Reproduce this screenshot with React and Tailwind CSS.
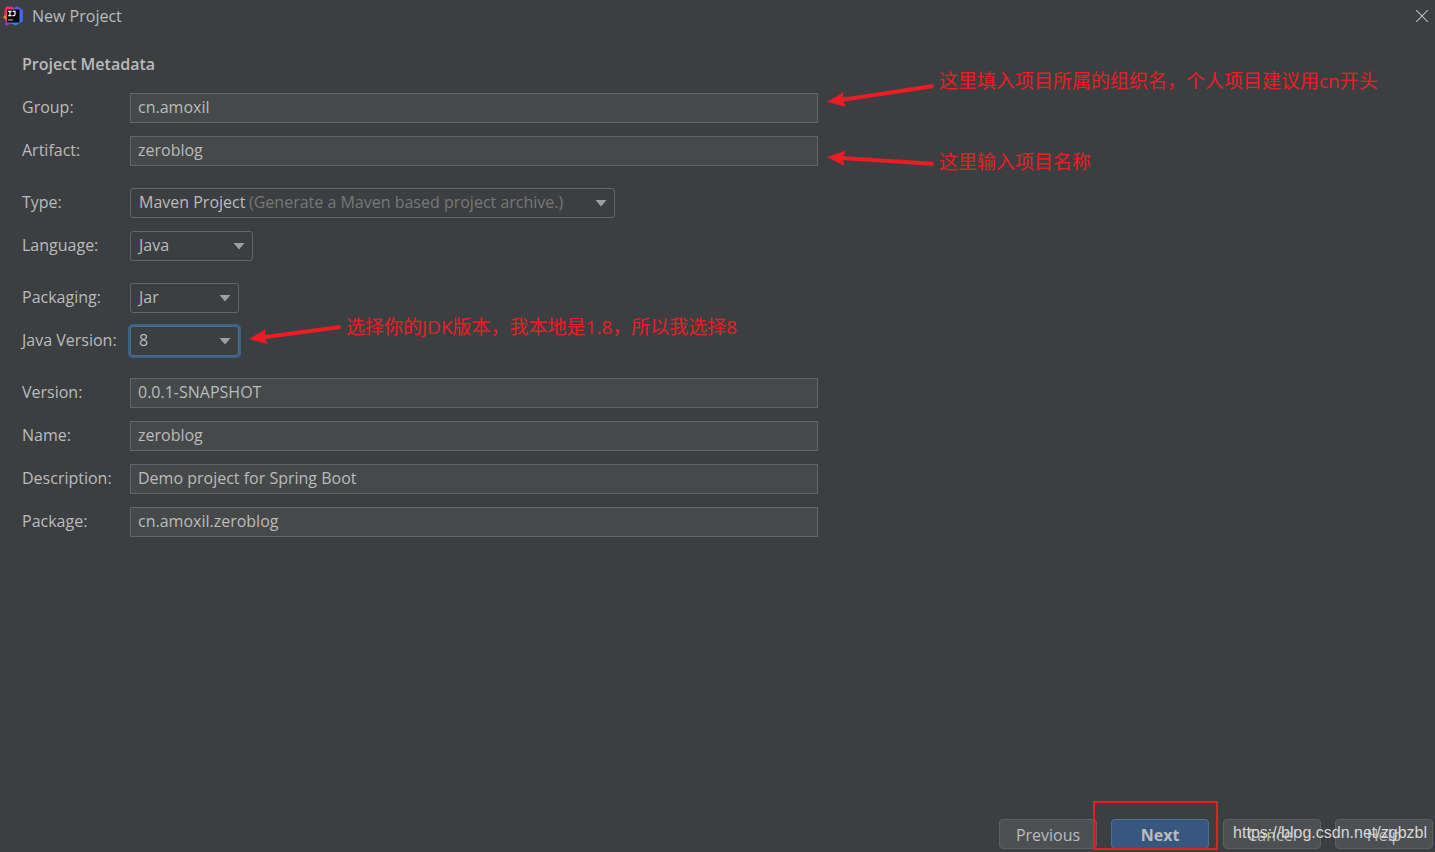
import { useState } from "react";

function AppLogo() {
  return (
    <svg className="w-5 h-5" viewBox="0 0 20 20">
      <defs>
        <linearGradient id="warm" x1="0" y1="0" x2="1" y2="0.3">
          <stop offset="0" stopColor="#fe2857" />
          <stop offset="0.7" stopColor="#f0357a" />
          <stop offset="1" stopColor="#7a4fd8" />
        </linearGradient>
        <linearGradient id="cool" x1="0" y1="0" x2="0" y2="1">
          <stop offset="0" stopColor="#5a58e0" />
          <stop offset="1" stopColor="#2f7bf0" />
        </linearGradient>
      </defs>
      <path d="M0 11l3.4-4 1.6 6.5L2.8 14z" fill="#fc801d" />
      <path d="M2.2 2.2L4 .2 10 1.2l2.5 3.4L10 12 4 12 1 7.6z" fill="url(#warm)" />
      <path d="M2.6 13.4l4-1.5 5 5-4.6 1.2-4.8 1.6z" fill="#9a3fb5" />
      <path d="M10.5 2.6L14 .2l6 3.8-.4 11.6-6.8 4-5.4-2.4 3-8z" fill="url(#cool)" />
      <rect x="4" y="3.5" width="12.5" height="13" fill="#0c0c0e" />
      <path d="M5.2 5.4h3.4M6.9 5.4v4.2M5.2 9.6h3.4M9.8 5.4h2.8M12 5.4v2.8q0 1.5-1.5 1.5h-1" stroke="#fff" strokeWidth="1.2" fill="none" />
      <path d="M5.2 14h4.6" stroke="#a8a8a8" strokeWidth="1.2" />
    </svg>
  );
}

function Arrow({ className, width, height, from, to }) {
  const angle = (Math.atan2(to[1] - from[1], to[0] - from[0]) * 180) / Math.PI;
  const length = Math.hypot(to[0] - from[0], to[1] - from[1]);
  return (
    <svg className={className} width={width} height={height} viewBox={`0 0 ${width} ${height}`}>
      <g transform={`translate(${to[0]} ${to[1]}) rotate(${angle})`} fill="#ed1c24">
        <path d={`M${2 - length} 0H-14`} stroke="#ed1c24" strokeWidth="4" strokeLinecap="round" />
        <path d="M0 0L-18 7.5L-15.5 0L-18-7.5z" />
      </g>
    </svg>
  );
}

function Note({ className, children }) {
  return (
    <p className={`absolute whitespace-nowrap text-[19px] leading-7 text-[#ed1c24] font-['Open_Sans','Noto_Sans_CJK_SC',sans-serif] ${className}`}>
      {children}
    </p>
  );
}

function Row({ id, label, children }) {
  return (
    <div className="flex items-center h-[30px]">
      <label htmlFor={id} className="w-[108px] shrink-0 whitespace-nowrap pb-[2px]">{label}</label>
      {children}
    </div>
  );
}

function TextField({ id, label, value, onChange, children }) {
  return (
    <Row id={id} label={label}>
      <div className="relative flex-1">
        <input
          id={id}
          name={id}
          type="text"
          value={value}
          onChange={onChange}
          className="block w-full h-[30px] px-[7px] pb-[2px] bg-[#45494a] border border-[#646666] outline-none"
        />
        {children}
      </div>
    </Row>
  );
}

function SelectField({ id, label, value, onChange, options, hint, width, focused, children }) {
  return (
    <Row id={id} label={label}>
      <div className={`relative ${width}`}>
        <select
          id={id}
          name={id}
          value={value}
          onChange={onChange}
          className={`block appearance-none w-full h-[30px] pl-1 indent-1 pr-8 pb-[2px] rounded-[3px] border bg-[#3c3f41] outline-none
            ${focused ? "border-[#466d94] ring-2 ring-[#3d6185]" : "border-[#646666]"}`}
        >
          {options.map((o) => (
            <option key={o}>{o}</option>
          ))}
        </select>
        {hint && (
          <span className="absolute left-[119px] top-0 leading-7 whitespace-nowrap text-[#777777] pointer-events-none">{hint}</span>
        )}
        <svg className="absolute right-2 top-3 w-3 h-[7px] pointer-events-none" viewBox="0 0 12 7">
          <path d="M0.5 0h11L6 6.5z" fill="#9da0a2" />
        </svg>
        {children}
      </div>
    </Row>
  );
}

const buttonBase = "w-[98px] h-[30px] pt-[2px] rounded-[4px] border";

export default function App() {
  const [form, setForm] = useState({
    group: "cn.amoxil",
    artifact: "zeroblog",
    type: "Maven Project",
    language: "Java",
    packaging: "Jar",
    javaVersion: "8",
    version: "0.0.1-SNAPSHOT",
    name: "zeroblog",
    description: "Demo project for Spring Boot",
    package: "cn.amoxil.zeroblog",
  });

  const handleChange = (e) => {
    const { name, value } = e.target;
    setForm((f) => ({ ...f, [name]: value }));
  };

  return (
    <div className="min-h-screen flex flex-col overflow-hidden bg-[#3c3f41] text-[#bbbbbb] text-base font-['Open_Sans','Noto_Sans_CJK_SC',sans-serif]">
      {/* Title bar */}
      <header className="flex items-center h-8 pl-[3px] pr-[7px]">
        <AppLogo />
        <span className="ml-[9px]">New Project</span>
        <button type="button" aria-label="Close" className="ml-auto">
          <svg className="w-3 h-3" viewBox="0 0 12 12" stroke="#b4b6b7" strokeWidth="1.2">
            <path d="M0 0l12 12M12 0L0 12" />
          </svg>
        </button>
      </header>

      <main className="flex-1 w-[57%] pl-[22px] pt-5">
        <h1 className="font-semibold leading-6 mb-[17px]">Project Metadata</h1>

        <form className="flex flex-col gap-[22px]">
          <div className="flex flex-col gap-[13px]">
            <TextField id="group" label="Group:" value={form.group} onChange={handleChange}>
              <Arrow className="absolute left-full top-[-15px] ml-2" width={110} height={34} from={[108, 8]} to={[1, 24]} />
              <Note className="left-full top-[-26px] ml-[121px]">这里填入项目所属的组织名，个人项目建议用cn开头</Note>
            </TextField>
            <TextField id="artifact" label="Artifact:" value={form.artifact} onChange={handleChange}>
              <Arrow className="absolute left-full top-2 ml-2" width={110} height={30} from={[108, 20]} to={[1, 13]} />
              <Note className="left-full top-3 ml-[121px]">这里输入项目名称</Note>
            </TextField>
          </div>

          <div className="flex flex-col gap-[13px]">
            <SelectField
              id="type"
              label="Type:"
              value={form.type}
              onChange={handleChange}
              options={["Maven Project", "Gradle Project"]}
              hint="(Generate a Maven based project archive.)"
              width="w-[485px]"
            />
            <SelectField id="language" label="Language:" value={form.language} onChange={handleChange} options={["Java", "Kotlin", "Groovy"]} width="w-[123px]" />
          </div>

          <div className="flex flex-col gap-[13px]">
            <SelectField id="packaging" label="Packaging:" value={form.packaging} onChange={handleChange} options={["Jar", "War"]} width="w-[109px]" />
            <SelectField id="javaVersion" label="Java Version:" value={form.javaVersion} onChange={handleChange} options={["8", "11", "14"]} width="w-[109px]" focused>
              <Arrow className="absolute left-full top-[-6px] ml-2" width={100} height={30} from={[94, 7]} to={[2, 19]} />
              <Note className="left-full top-[-13px] ml-[107px]">选择你的JDK版本，我本地是1.8，所以我选择8</Note>
            </SelectField>
          </div>

          <div className="flex flex-col gap-[13px]">
            <TextField id="version" label="Version:" value={form.version} onChange={handleChange} />
            <TextField id="name" label="Name:" value={form.name} onChange={handleChange} />
            <TextField id="description" label="Description:" value={form.description} onChange={handleChange} />
            <TextField id="package" label="Package:" value={form.package} onChange={handleChange} />
          </div>
        </form>
      </main>

      {/* Wizard buttons */}
      <footer className="relative flex justify-end gap-[14px] pr-[2px] pb-[3px]">
        <button type="button" className={`${buttonBase} bg-[#4c5052] border-[#5e6060]`}>Previous</button>
        <div className="relative">
          <button type="button" className={`${buttonBase} bg-[#365880] border-[#4c708c] font-bold`}>Next</button>
          <div className="absolute -left-[18px] -right-[9px] -top-[18px] -bottom-px border-2 border-[#ed1c24] pointer-events-none" />
        </div>
        <button type="button" className={`${buttonBase} bg-[#4c5052] border-[#5e6060]`}>Cancel</button>
        <button type="button" className={`${buttonBase} bg-[#4c5052] border-[#5e6060]`}>Help</button>
        <span className="absolute right-2 top-0 leading-7 text-base text-[#d6d7d8] font-['Liberation_Sans',sans-serif] pointer-events-none">
          https://blog.csdn.net/zgbzbl
        </span>
      </footer>
    </div>
  );
}
